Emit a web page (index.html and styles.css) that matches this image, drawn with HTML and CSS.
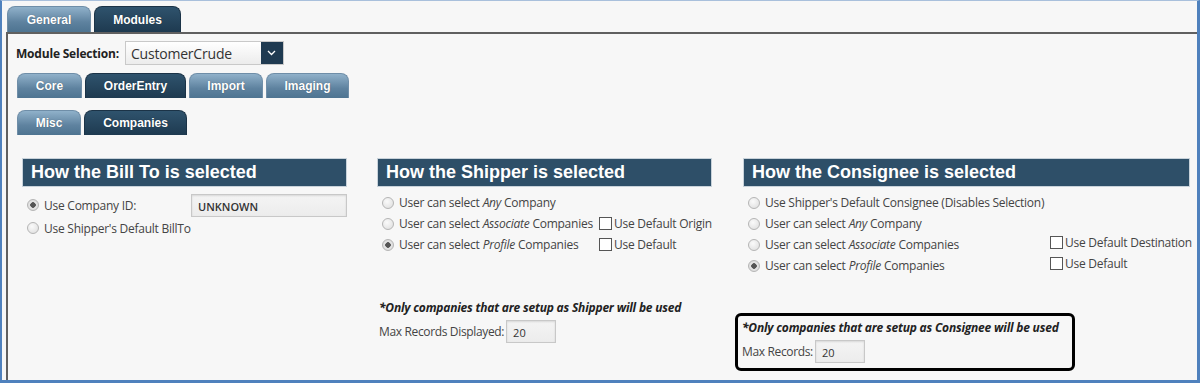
FILE: index.html
```html
<!DOCTYPE html>
<html lang="en">

<head>
  <meta charset="UTF-8" />
  <title>Modules - Companies</title>
  <link rel="stylesheet" href="styles.css">
</head>

<body>
  <div class="frame">

    <div class="tabs">
      <div class="tab">General</div>
      <div class="tab active">Modules</div>
    </div>

    <div class="panel">

      <div class="module-row">
        <label class="module-label">Module Selection:</label>
        <div class="select">
          <span class="select-value">CustomerCrude</span>
          <span class="select-btn">
            <svg width="9" height="6" viewBox="0 0 9 6"><path d="M1 1 L4.5 4.5 L8 1" fill="none" stroke="#fff" stroke-width="1.3"/></svg>
          </span>
        </div>
      </div>

      <div class="subtabs">
        <div class="tab sub w-core">Core</div>
        <div class="tab sub active w-order">OrderEntry</div>
        <div class="tab sub w-import">Import</div>
        <div class="tab sub w-imaging">Imaging</div>
      </div>
      <div class="subtabs second">
        <div class="tab sub w-misc">Misc</div>
        <div class="tab sub active w-comp">Companies</div>
      </div>

      <div class="sections">

        <div class="section billto">
          <h2 class="section-head">How the Bill To is selected</h2>
          <div class="row first">
            <label class="opt"><input type="radio" name="bill" checked> Use Company ID:</label>
            <input type="text" class="text company-id" value="UNKNOWN">
          </div>
          <div class="row">
            <label class="opt"><input type="radio" name="bill"> Use Shipper's Default BillTo</label>
          </div>
        </div>

        <div class="section shipper">
          <h2 class="section-head">How the Shipper is selected</h2>
          <div class="row">
            <label class="opt"><input type="radio" name="ship"> User can select <i>Any</i> Company</label>
          </div>
          <div class="row">
            <label class="opt"><input type="radio" name="ship"> User can select <i>Associate</i> Companies</label>
            <label class="chk"><input type="checkbox">Use Default Origin</label>
          </div>
          <div class="row">
            <label class="opt"><input type="radio" name="ship" checked> User can select <i>Profile</i> Companies</label>
            <label class="chk"><input type="checkbox">Use Default</label>
          </div>

          <div class="note-block">
            <p class="note">*Only companies that are setup as Shipper will be used</p>
            <div class="max-row">
              <span>Max Records Displayed:</span>
              <input type="text" class="text small" value="20">
            </div>
          </div>
        </div>

        <div class="section consignee">
          <h2 class="section-head">How the Consignee is selected</h2>
          <div class="row">
            <label class="opt"><input type="radio" name="cons"> Use Shipper's Default Consignee (Disables Selection)</label>
          </div>
          <div class="row">
            <label class="opt"><input type="radio" name="cons"> User can select <i>Any</i> Company</label>
          </div>
          <div class="row">
            <label class="opt"><input type="radio" name="cons"> User can select <i>Associate</i> Companies</label>
            <label class="chk"><input type="checkbox">Use Default Destination</label>
          </div>
          <div class="row">
            <label class="opt"><input type="radio" name="cons" checked> User can select <i>Profile</i> Companies</label>
            <label class="chk"><input type="checkbox">Use Default</label>
          </div>

          <div class="note-box">
            <p class="note">*Only companies that are setup as Consignee will be used</p>
            <div class="max-row">
              <span>Max Records:</span>
              <input type="text" class="text small" value="20">
            </div>
          </div>
        </div>

      </div>
    </div>
  </div>
</body>

</html>
```

FILE: styles.css
```css
* {
  box-sizing: border-box;
}

body {
  margin: 0;
  background-color: #f7f7f7;
  font-family: "Open Sans", "Noto Sans", sans-serif;
  color: #444;
}

.frame {
  width: 1200px;
  height: 383px;
  border-top: 1px solid #a9c0dc;
  border-left: 2px solid #4f81bd;
  border-right: 3px solid #4f81bd;
  border-bottom: 3px solid #4f81bd;
  background-color: #f7f7f7;
  display: flex;
  flex-direction: column;
  overflow: hidden;
}

/* tabs */

.tabs {
  display: flex;
  gap: 3px;
  padding: 5px 0 0 5px;
}

.tab {
  height: 26px;
  border-radius: 8px 8px 0 0;
  background: linear-gradient(#90b1ca, #5e829f 60%, #4e7491);
  color: #fff;
  font-family: "Liberation Sans", Arial, sans-serif;
  font-weight: bold;
  font-size: 12px;
  display: flex;
  align-items: center;
  justify-content: center;
  text-shadow: 0 0 1px rgba(0, 0, 0, 0.4);
  border: 1px solid #6f8ea8;
  border-bottom: none;
}

.tab.active {
  background: linear-gradient(#2f536d, #1e3a50);
  border-color: #1b3347;
}

.tabs .tab {
  width: 84px;
}

.tabs .tab.active {
  width: 87px;
}

.panel {
  flex: 1;
  margin-left: 4px;
  border-top: 2px solid #606060;
  border-left: 2px solid #606060;
  padding: 7px 0 0 8px;
}

.module-row {
  display: flex;
  align-items: center;
  gap: 6px;
}

.module-label {
  font-weight: bold;
  font-size: 12px;
  color: #222;
  letter-spacing: -0.2px;
}

.select {
  width: 159px;
  height: 24px;
  border: 1px solid #c9c9c9;
  background: linear-gradient(#fff, #ececec);
  display: flex;
  align-items: center;
  justify-content: space-between;
}

.select-value {
  font-size: 14px;
  color: #333;
  padding-left: 5px;
  letter-spacing: -0.2px;
}

.select-btn {
  width: 22px;
  height: 22px;
  background-color: #1f3a51;
  display: flex;
  align-items: center;
  justify-content: center;
}

.subtabs {
  display: flex;
  gap: 3px;
  margin-top: 8px;
  padding-left: 1px;
}

.subtabs.second {
  margin-top: 12px;
}

.subtabs .tab {
  height: 25px;
}

.w-core { width: 65px; }
.w-order { width: 101px; }
.w-import { width: 74px; }
.w-imaging { width: 83px; }
.w-misc { width: 64px; }
.w-comp { width: 103px; }

/* sections */

.sections {
  display: flex;
  margin-top: 24px;
  padding-left: 7px;
}

.section-head {
  margin: 0 0 6px;
  height: 27px;
  background-color: #2e4f68;
  color: #fff;
  font-family: "Liberation Sans", Arial, sans-serif;
  font-size: 18px;
  font-weight: bold;
  line-height: 27px;
  padding-left: 8px;
  box-shadow: 0 0 0 1px #c8d2da;
}

.billto {
  width: 323px;
}

.shipper {
  width: 333px;
  margin-left: 32px;
}

.consignee {
  width: 445px;
  margin-left: 33px;
}

.row {
  display: grid;
  align-items: center;
  height: 21px;
}

.billto .row {
  grid-template-columns: 168px 156px;
  height: 20px;
}

.billto .row.first {
  height: 26px;
}

.shipper .row {
  grid-template-columns: 221px auto;
}

.consignee .row {
  grid-template-columns: 306px auto;
}

.consignee .chk {
  margin-top: -4px;
}

.opt,
.chk {
  display: flex;
  align-items: center;
  font-size: 12px;
  color: #444;
  white-space: nowrap;
  letter-spacing: -0.25px;
}

.opt i {
  margin: 0 3px;
}

input[type="radio"] {
  appearance: none;
  width: 12px;
  height: 12px;
  margin: 0 5px 0 4px;
  border-radius: 50%;
  border: 1px solid #b5b5b5;
  background: radial-gradient(circle at 40% 35%, #fafafa, #dcdcdc);
}

input[type="radio"]:checked {
  background: radial-gradient(circle, #555 0 2.5px, #e6e6e6 3px, #d4d4d4);
}

input[type="checkbox"] {
  appearance: none;
  width: 13px;
  height: 13px;
  margin: 0 2px 0 0;
  border: 1px solid #555;
  background-color: #fff;
}

.text {
  height: 23px;
  border: 1px solid #c8c8c8;
  background: linear-gradient(#f4f4f4, #ececec);
  box-shadow: inset 0 1px 2px rgba(0, 0, 0, 0.12);
  font-family: "Open Sans", sans-serif;
  font-size: 11px;
  color: #333;
  padding: 2px 0 0 6px;
}

.company-id {
  width: 156px;
  font-weight: 600;
}

.note {
  margin: 0;
  font-size: 12px;
  font-weight: bold;
  font-style: italic;
  color: #222;
  letter-spacing: -0.2px;
}

.max-row {
  display: flex;
  align-items: center;
  gap: 2px;
  font-size: 12px;
  color: #444;
  letter-spacing: -0.35px;
  margin-top: 4px;
}

.small {
  width: 50px;
}

.note-block {
  margin-top: 44px;
  padding-left: 1px;
}

.note-box {
  margin: 37px 0 0 -9px;
  width: 340px;
  height: 58px;
  border: 3px solid #000;
  border-radius: 6px;
  padding: 3px 0 0 4px;
}
```
